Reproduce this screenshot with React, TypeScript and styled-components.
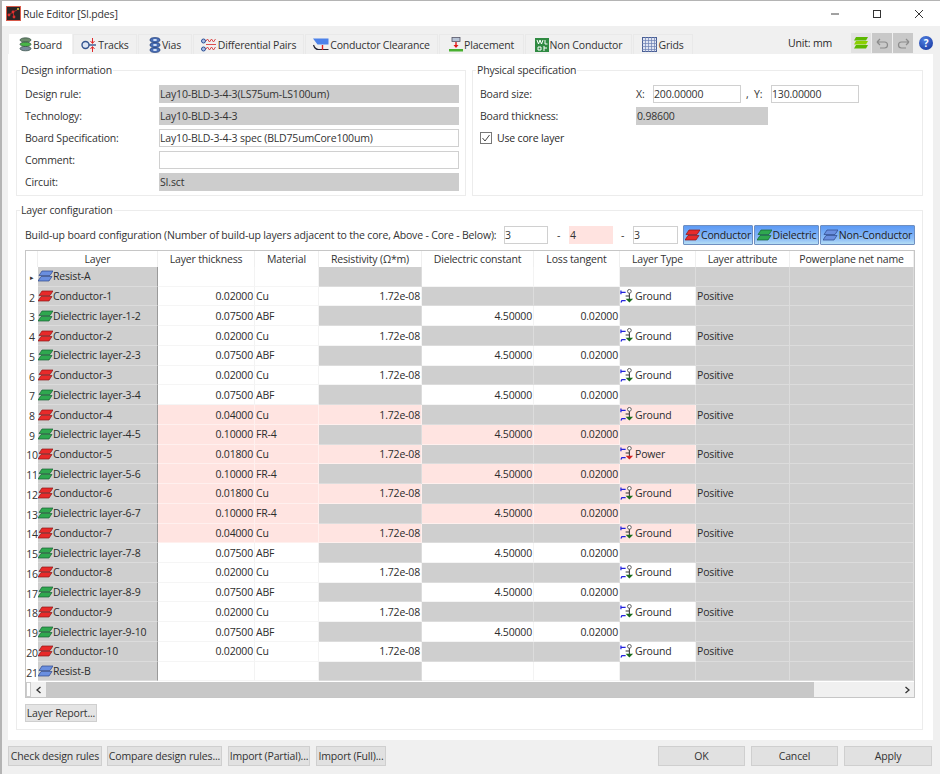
import React from "react";
import styled, { createGlobalStyle } from "styled-components";

const Global = createGlobalStyle`
  html, body { margin: 0; padding: 0; background: #f0f0f0; }
  #root { width: 940px; height: 774px; overflow: hidden; }
  * { box-sizing: border-box; }
`;

const Win = styled.div`
  width: 940px; height: 774px; display: flex; flex-direction: column;
  background: #f0f0f0; color: #2a2a2a;
  font-family: "Open Sans", "Noto Sans", sans-serif; font-size: 10.5px; letter-spacing: -0.17px;
  border-top: 1px solid #b4b4b4; border-left: 2px solid #b4b4b4;
`;
const TitleBar = styled.div`
  height: 25px; flex: none; background: #fff; display: flex; align-items: center; padding: 0 0 0 4px;
`;
const TitleText = styled.div`margin-left: 2px; flex: 1; color: #333;`;
const WinCtl = styled.div`width: 42px; height: 25px; display: flex; align-items: center; justify-content: center;`;
const TabRow = styled.div`
  height: 28px; flex: none; display: flex; align-items: flex-end; padding-left: 7px;
`;
const Tab = styled.div<{ $w: number; $active?: boolean }>`
  width: ${p => p.$w}px; height: 20px; display: flex; align-items: center; justify-content: center; gap: 1px;
  background: ${p => (p.$active ? "#fff" : "#f0f0f0")};
  border: 1px solid ${p => (p.$active ? "#fff" : "#e9e9e9")}; border-bottom: none;
  margin-right: 1px; color: #333; white-space: nowrap;
`;
const UnitBox = styled.div`flex: 1; display: flex; align-items: center; justify-content: flex-end; height: 20px; margin-bottom: 1px; padding-right: 7px;`;
const UnitText = styled.span`margin-right: 18px;`;
const ToolBtn = styled.div<{ $light?: boolean }>`
  width: 20px; height: 20px; display: flex; align-items: center; justify-content: center;
  background: ${p => (p.$light ? "#e2e2e2" : "#c9c9c9")}; margin-left: 1px;
`;
const HelpIcon = styled.div`
  width: 14px; height: 14px; margin-left: 6px; border-radius: 50%; color: #fff; font-weight: 700; font-size: 10px;
  display: flex; align-items: center; justify-content: center;
  background: radial-gradient(circle at 40% 30%, #4f7fe0, #12309a);
`;
const Panel = styled.div`
  height: 686px; flex: none; margin: 0 7px 0 6px; padding: 9px 10px 0 8px; background: #fff;
  display: flex; flex-direction: column; gap: 7px;
`;
const TopGroups = styled.div`display: flex; gap: 6px; height: 133px; flex: none;`;
const Group = styled.fieldset<{ $w?: number; $h?: number; $pl?: number }>`
  margin: 0; min-width: 0; border: 1px solid #ececec; padding: 8px 6px 0 ${p => p.$pl ?? 8}px;
  width: ${p => (p.$w ? p.$w + "px" : "auto")}; height: ${p => (p.$h ? p.$h + "px" : "auto")};
`;
const Legend = styled.legend<{ $ml?: number }>`padding: 0 1px; margin-left: ${p => p.$ml ?? -5}px; line-height: 14px; color: #333;`;
const FormRows = styled.div`display: flex; flex-direction: column; gap: 4px;`;
const FormRow = styled.div`display: flex; align-items: center; height: 18px;`;
const Label = styled.div<{ $w: number }>`width: ${p => p.$w}px; flex: none; color: #333;`;
const Field = styled.div<{ $w: number; $kind?: "gray" | "white" | "pink" }>`
  width: ${p => p.$w}px; height: 18px; flex: none; padding: 0; display: flex; align-items: center; color: #333;
  background: ${p => (p.$kind === "gray" ? "#cdcdcd" : p.$kind === "pink" ? "#ffe3e0" : "#fff")};
  border: 1px solid ${p => (p.$kind === "gray" ? "#cdcdcd" : p.$kind === "pink" ? "#ffe3e0" : "#d0d0d0")};
`;
const Sep = styled.span<{ $w: number; $l?: number }>`width: ${p => p.$w}px; padding-left: ${p => p.$l ?? 0}px; flex: none; color: #333;`;
const Check = styled.div`
  width: 12px; height: 12px; border: 1px solid #777; margin-right: 5px; display: flex; align-items: center; justify-content: center;
`;
const BuildRow = styled.div`display: flex; align-items: center; height: 20px; margin-bottom: 5px;`;
const BuildLabel = styled.div`width: 479px; flex: none; color: #333; white-space: nowrap;`;
const LegendBtn = styled.div<{ $w: number }>`
  width: ${p => p.$w}px; height: 20px; flex: none; margin-right: 1px; display: flex; align-items: center; justify-content: center; gap: 1px;
  background: linear-gradient(#5c9af5, #8cbcf7 70%, #b5def5); border: 1px solid #6f8fc0; border-radius: 1px; color: #222; white-space: nowrap;
`;
const GridWrap = styled.div`width: 890px; height: 448px; border: 1px solid #c6c6c6; display: flex; flex-direction: column;`;
const Table = styled.div`
  display: grid; flex: none;
  grid-template-columns: 12px 120px 97px 64px 103px 112px 86px 76px 94px 124px;
  grid-template-rows: 16px repeat(21, 19.74px);
`;
const Head = styled.div`
  display: flex; align-items: center; justify-content: center; background: #fff; color: #333;
  border-right: 1px solid #efefef; white-space: nowrap;
`;
const RowNum = styled.div<{ $marker?: boolean }>`
  display: flex; align-items: center; justify-content: center; background: #fff; color: #333; white-space: nowrap; padding-top: 2px;
  font-size: ${p => (p.$marker ? 7 : 10.5)}px;
`;
const Cell = styled.div<{ $t: "g" | "w" | "p"; $right?: boolean }>`
  display: flex; align-items: center; overflow: hidden; white-space: nowrap; padding: 0 1px; color: #2c2c2c;
  justify-content: ${p => (p.$right ? "flex-end" : "flex-start")};
  background: ${p => (p.$t === "g" ? "#cfcfcf" : p.$t === "p" ? "#ffe4e1" : "#fff")};
  border-right: 1px solid ${p => (p.$t === "g" ? "#dcdcdc" : p.$t === "p" ? "#fff0ee" : "#f3f3f3")};
  border-bottom: 1px solid ${p => (p.$t === "g" ? "#dcdcdc" : p.$t === "p" ? "#fff0ee" : "#f5f5f5")};
`;
const LayerCell = styled(Cell)`border-right: 1px solid #9a9a9a; padding-left: 0;`;
const TypeCell = styled(Cell)`padding-left: 0;`;
const Scroll = styled.div`flex: 1; display: flex; align-items: stretch; background: #f0f0f0; border-top: 1px solid #fff;`;
const ScrollStub = styled.div`width: 5px; border: 1px solid #ccc; background: #fff; flex: none;`;
const ScrollBtn = styled.div`width: 15px; flex: none; display: flex; align-items: center; justify-content: center; background: #f0f0f0;`;
const Thumb = styled.div`width: 768px; flex: none; background: #c8c8c8;`;
const ScrollFill = styled.div`flex: 1;`;
const Btn = styled.div<{ $w: number; $ml?: number }>`
  width: ${p => p.$w}px; height: 20px; flex: none; margin-left: ${p => p.$ml ?? 0}px; background: #e1e1e1; border: 1px solid #cfcfcf;
  display: flex; align-items: center; justify-content: center; color: #333; white-space: nowrap;
`;
const ReportBtn = styled(Btn)`height: 18px; margin-top: 6px; background: #e4e4e4;`;
const BottomBar = styled.div`flex: 1; display: flex; align-items: flex-start; padding: 6px 0 0 6px;`;
const Spacer = styled.div`flex: 1;`;

const LayerIcon = ({ c, d }: { c: string; d: string }) => (
  <svg width="15" height="12" viewBox="0 0 15 12" style={{ flex: "none" }}>
    <path d="M3 6.5h11l-3 4.5H0z" fill={c} stroke={d} strokeWidth=".7" />
    <path d="M4 1h11l-3 4.5H1z" fill={c} stroke={d} strokeWidth=".7" />
  </svg>
);
const NetIcon = ({ c = "#1c6b1c" }: { c?: string }) => (
  <svg width="15" height="17" viewBox="0 0 16 17" style={{ flex: "none" }}>
    <path d="M1 2v4M1 4h5M1 15l1-2h4" stroke="#2222dd" strokeWidth="1.3" fill="none" />
    <circle cx="10" cy="3" r="2" fill="#fff" stroke="#555" />
    <path d="M10 5v8M6 8h4" stroke="#333" strokeWidth="1.1" fill="none" />
    <path d="M6 11h8l-4 4z" fill={c} />
  </svg>
);
const BoardIcon = () => (
  <svg width="13" height="15" viewBox="0 0 13 15">
    <ellipse cx="6.5" cy="3" rx="5.5" ry="2.2" fill="#6c8a6c" stroke="#2e4a3e" strokeWidth=".7" />
    <ellipse cx="6.5" cy="7.3" rx="5.5" ry="2.2" fill="#49b548" stroke="#2e4a3e" strokeWidth=".7" />
    <ellipse cx="6.5" cy="11.6" rx="5.5" ry="2.2" fill="#7a8a9a" stroke="#2e4a3e" strokeWidth=".7" />
  </svg>
);
const TracksIcon = () => (
  <svg width="16" height="14" viewBox="0 0 16 14">
    <circle cx="4.5" cy="7" r="3.5" fill="#dde6f5" stroke="#34558f" strokeWidth="1.4" />
    <path d="M8 7h7" stroke="#34558f" strokeWidth="1.4" />
    <path d="M11.5 0v5M11.5 9v5M9.5 3l2 2.5 2-2.5M9.5 11l2-2.5 2 2.5" stroke="#e0282a" strokeWidth="1" fill="none" />
  </svg>
);
const ViasIcon = () => (
  <svg width="12" height="16" viewBox="0 0 12 16">
    {[3, 8, 13].map(y => (
      <g key={y}>
        <ellipse cx="6" cy={y} rx="5" ry="2.4" fill="#4a70b8" stroke="#1f3a72" strokeWidth=".7" />
        <ellipse cx="6" cy={y} rx="2" ry=".9" fill="#dfe8f8" />
      </g>
    ))}
  </svg>
);
const DiffIcon = () => (
  <svg width="16" height="14" viewBox="0 0 16 14">
    <circle cx="2.5" cy="3" r="2" fill="#aac0e6" stroke="#2c4f96" />
    <circle cx="2.5" cy="11" r="2" fill="#aac0e6" stroke="#2c4f96" />
    <path d="M5 3l1.5-2 2 3 2-3 2 3 2-3M5 6.5h10" stroke="#d83a3a" strokeWidth=".9" fill="none" />
    <path d="M5 11l1.5-2 2 3 2-3 2 3 2-3" stroke="#d83a3a" strokeWidth=".9" fill="none" />
  </svg>
);
const ClearIcon = () => (
  <svg width="16" height="14" viewBox="0 0 16 14">
    <path d="M0 .5h15.5v6h-11z" fill="#4d82ea" />
    <path d="M.5 7c1 3 2.5 4.5 5 4.5h10" stroke="#223" strokeWidth="1.2" fill="none" />
    <path d="M9.5 7v5" stroke="#e02020" strokeWidth="1.4" />
  </svg>
);
const PlaceIcon = () => (
  <svg width="14" height="15" viewBox="0 0 14 15">
    <rect x="3" y=".5" width="8" height="4" fill="#b7c3d6" stroke="#556" strokeWidth=".8" />
    <path d="M7 5v5" stroke="#e01818" strokeWidth="1.4" />
    <path d="M4.5 8h5L7 11z" fill="#e01818" />
    <rect x="0" y="12" width="14" height="2.5" fill="#48b030" />
  </svg>
);
const NonIcon = () => (
  <svg width="14" height="14" viewBox="0 0 14 14">
    <rect width="14" height="14" fill="#2f8a42" />
    <path d="M2 2l1.5 4L5 2l1.5 4L8 2M10 2v4h2.5M3 9h3v3H3zM9 8v5M9 10h3" stroke="#fff" strokeWidth="1" fill="none" />
  </svg>
);
const GridIcon = () => (
  <svg width="15" height="15" viewBox="0 0 15 15">
    <rect x=".5" y=".5" width="14" height="14" fill="#dfe4f2" stroke="#4a5f94" />
    <path d="M3.5 0v15M6.5 0v15M9.5 0v15M12.5 0v15M0 3.5h15M0 6.5h15M0 9.5h15M0 12.5h15" stroke="#6b7fb3" strokeWidth=".7" />
  </svg>
);
const StackIcon = () => (
  <svg width="14" height="12" viewBox="0 0 14 12">
    {[0, 4, 8].map(y => <path key={y} d={`M2 ${y}h12l-2 3.5H0z`} fill={y === 4 ? "#8bd000" : "#5cb800"} />)}
  </svg>
);
const Curve = ({ flip }: { flip?: boolean }) => (
  <svg width="13" height="11" viewBox="0 0 13 11" style={flip ? { transform: "scaleX(-1)" } : undefined}>
    <path d="M1 4h7.5a3 3 0 0 1 0 6H4M1 4l3-3M1 4l3 3" stroke="#8c8c8c" strokeWidth="1.2" fill="none" />
  </svg>
);
const AppIcon = () => (
  <svg width="15" height="15" viewBox="0 0 15 15" style={{ flex: "none" }}>
    <rect x=".5" y=".5" width="14" height="14" fill="#2a2526" stroke="#d85a4a" />
    <path d="M3 9l4-3 4-2M7 6l1 5" stroke="#d83030" strokeWidth=".8" />
    <circle cx="3" cy="9" r="1.4" fill="#e03030" />
    <circle cx="7" cy="6" r="1.4" fill="#e03030" />
    <circle cx="8" cy="11" r="1.4" fill="#e03030" />
    <circle cx="12" cy="3" r="1" fill="#e8d040" />
  </svg>
);

const RED = ["#e82a2a", "#8a1414"];
const GRN = ["#2fa84f", "#146030"];
const BLU = ["#6a8fe0", "#2c4688"];

type Row = { n: string; name: string; kind: "r" | "c" | "d"; th?: string; mat?: string; pink?: boolean; type?: string };
const rows: Row[] = [
  { n: "▸", name: "Resist-A", kind: "r" },
  { n: "2", name: "Conductor-1", kind: "c", th: "0.02000", mat: "Cu", type: "Ground" },
  { n: "3", name: "Dielectric layer-1-2", kind: "d", th: "0.07500", mat: "ABF" },
  { n: "4", name: "Conductor-2", kind: "c", th: "0.02000", mat: "Cu", type: "Ground" },
  { n: "5", name: "Dielectric layer-2-3", kind: "d", th: "0.07500", mat: "ABF" },
  { n: "6", name: "Conductor-3", kind: "c", th: "0.02000", mat: "Cu", type: "Ground" },
  { n: "7", name: "Dielectric layer-3-4", kind: "d", th: "0.07500", mat: "ABF" },
  { n: "8", name: "Conductor-4", kind: "c", th: "0.04000", mat: "Cu", type: "Ground", pink: true },
  { n: "9", name: "Dielectric layer-4-5", kind: "d", th: "0.10000", mat: "FR-4", pink: true },
  { n: "10", name: "Conductor-5", kind: "c", th: "0.01800", mat: "Cu", type: "Power", pink: true },
  { n: "11", name: "Dielectric layer-5-6", kind: "d", th: "0.10000", mat: "FR-4", pink: true },
  { n: "12", name: "Conductor-6", kind: "c", th: "0.01800", mat: "Cu", type: "Ground", pink: true },
  { n: "13", name: "Dielectric layer-6-7", kind: "d", th: "0.10000", mat: "FR-4", pink: true },
  { n: "14", name: "Conductor-7", kind: "c", th: "0.04000", mat: "Cu", type: "Ground", pink: true },
  { n: "15", name: "Dielectric layer-7-8", kind: "d", th: "0.07500", mat: "ABF" },
  { n: "16", name: "Conductor-8", kind: "c", th: "0.02000", mat: "Cu", type: "Ground" },
  { n: "17", name: "Dielectric layer-8-9", kind: "d", th: "0.07500", mat: "ABF" },
  { n: "18", name: "Conductor-9", kind: "c", th: "0.02000", mat: "Cu", type: "Ground" },
  { n: "19", name: "Dielectric layer-9-10", kind: "d", th: "0.07500", mat: "ABF" },
  { n: "20", name: "Conductor-10", kind: "c", th: "0.02000", mat: "Cu", type: "Ground" },
  { n: "21", name: "Resist-B", kind: "r" },
];
const heads = ["", "Layer", "Layer thickness", "Material", "Resistivity (Ω*m)", "Dielectric constant", "Loss tangent", "Layer Type", "Layer attribute", "Powerplane net name"];
const tabs: [string, number, React.ReactNode][] = [
  ["Board", 63, <BoardIcon />], ["Tracks", 64, <TracksIcon />], ["Vias", 54, <ViasIcon />],
  ["Differential Pairs", 111, <DiffIcon />], ["Conductor Clearance", 133, <ClearIcon />],
  ["Placement", 85, <PlaceIcon />], ["Non Conductor", 107, <NonIcon />], ["Grids", 60, <GridIcon />],
];

const LayerRow = ({ r }: { r: Row }) => {
  const icon = r.kind === "c" ? RED : r.kind === "d" ? GRN : BLU;
  const live = r.pink ? "p" : "w";
  const isC = r.kind === "c", isD = r.kind === "d";
  return (
    <>
      <RowNum $marker={r.n === "▸"}>{r.n}</RowNum>
      <LayerCell $t="g"><LayerIcon c={icon[0]} d={icon[1]} />{r.name}</LayerCell>
      <Cell $t={live} $right>{r.th}</Cell>
      <Cell $t={live}>{r.mat}</Cell>
      <Cell $t={isC ? live : "g"} $right>{isC ? "1.72e-08" : ""}</Cell>
      <Cell $t={isC ? "g" : live} $right>{isD ? "4.50000" : ""}</Cell>
      <Cell $t={isC ? "g" : live} $right>{isD ? "0.02000" : ""}</Cell>
      <TypeCell $t={isC ? live : "g"}>{isC && <NetIcon c={r.type === "Power" ? "#d02020" : undefined} />}{r.type}</TypeCell>
      <Cell $t="g">{isC ? "Positive" : ""}</Cell>
      <Cell $t="g" />
    </>
  );
};

export default function App() {
  return (
    <>
      <Global />
      <Win>
        <TitleBar>
          <AppIcon />
          <TitleText>Rule Editor [SI.pdes]</TitleText>
          <WinCtl><svg width="10" height="10"><path d="M1 5h8" stroke="#444" /></svg></WinCtl>
          <WinCtl><svg width="10" height="10"><rect x="1.5" y="1.5" width="7" height="7" fill="none" stroke="#333" /></svg></WinCtl>
          <WinCtl><svg width="10" height="10"><path d="M1 1l8 8M9 1l-8 8" stroke="#333" /></svg></WinCtl>
        </TitleBar>
        <TabRow>
          {tabs.map(([t, w, ic], i) => <Tab key={t} $w={w} $active={i === 0}>{ic}{t}</Tab>)}
          <UnitBox>
            <UnitText>Unit: mm</UnitText>
            <ToolBtn $light><StackIcon /></ToolBtn>
            <ToolBtn><Curve /></ToolBtn>
            <ToolBtn><Curve flip /></ToolBtn>
            <HelpIcon>?</HelpIcon>
          </UnitBox>
        </TabRow>
        <Panel>
          <TopGroups>
            <Group $w={450}>
              <Legend>Design information</Legend>
              <FormRows>
                <FormRow><Label $w={134}>Design rule:</Label><Field $w={300} $kind="gray">Lay10-BLD-3-4-3(LS75um-LS100um)</Field></FormRow>
                <FormRow><Label $w={134}>Technology:</Label><Field $w={300} $kind="gray">Lay10-BLD-3-4-3</Field></FormRow>
                <FormRow><Label $w={134}>Board Specification:</Label><Field $w={300}>Lay10-BLD-3-4-3 spec (BLD75umCore100um)</Field></FormRow>
                <FormRow><Label $w={134}>Comment:</Label><Field $w={300} /></FormRow>
                <FormRow><Label $w={134}>Circuit:</Label><Field $w={300} $kind="gray">SI.sct</Field></FormRow>
              </FormRows>
            </Group>
            <Group $w={451} $pl={7}>
              <Legend $ml={-4}>Physical specification</Legend>
              <FormRows>
                <FormRow>
                  <Label $w={156}>Board size:</Label>
                  <Sep $w={17}>X:</Sep><Field $w={88}>200.00000</Field>
                  <Sep $w={13} $l={5}>,</Sep><Sep $w={17}>Y:</Sep><Field $w={88}>130.00000</Field>
                </FormRow>
                <FormRow><Label $w={156}>Board thickness:</Label><Field $w={132} $kind="gray">0.98600</Field></FormRow>
                <FormRow>
                  <Check><svg width="10" height="10"><path d="M1.5 5l2.5 3 4.5-6" stroke="#444" fill="none" /></svg></Check>
                  Use core layer
                </FormRow>
              </FormRows>
            </Group>
          </TopGroups>
          <Group $h={527}>
            <Legend>Layer configuration</Legend>
            <BuildRow>
              <BuildLabel>Build-up board configuration (Number of build-up layers adjacent to the core, Above - Core - Below):</BuildLabel>
              <Field $w={44}>3</Field>
              <Sep $w={21} $l={9}>-</Sep>
              <Field $w={44} $kind="pink">4</Field>
              <Sep $w={20} $l={8}>-</Sep>
              <Field $w={45}>3</Field>
              <Sep $w={5} />
              <LegendBtn $w={70}><LayerIcon c={RED[0]} d={RED[1]} />Conductor</LegendBtn>
              <LegendBtn $w={65}><LayerIcon c={GRN[0]} d={GRN[1]} />Dielectric</LegendBtn>
              <LegendBtn $w={95}><LayerIcon c={BLU[0]} d={BLU[1]} />Non-Conductor</LegendBtn>
            </BuildRow>
            <GridWrap>
              <Table>
                {heads.map((h, i) => <Head key={i}>{h}</Head>)}
                {rows.map(r => <LayerRow key={r.n} r={r} />)}
              </Table>
              <Scroll>
                <ScrollStub />
                <ScrollBtn><svg width="8" height="8"><path d="M5.5 1L2 4l3.5 3" stroke="#333" strokeWidth="1.3" fill="none" /></svg></ScrollBtn>
                <Thumb />
                <ScrollFill />
                <ScrollBtn><svg width="8" height="8"><path d="M2.5 1L6 4 2.5 7" stroke="#333" strokeWidth="1.3" fill="none" /></svg></ScrollBtn>
              </Scroll>
            </GridWrap>
            <ReportBtn $w={72}>Layer Report...</ReportBtn>
          </Group>
        </Panel>
        <BottomBar>
          <Btn $w={94}>Check design rules</Btn>
          <Btn $w={115} $ml={5}>Compare design rules...</Btn>
          <Btn $w={82} $ml={6}>Import (Partial)...</Btn>
          <Btn $w={70} $ml={6}>Import (Full)...</Btn>
          <Spacer />
          <Btn $w={87}>OK</Btn>
          <Btn $w={87} $ml={6}>Cancel</Btn>
          <Btn $w={88} $ml={6}>Apply</Btn>
          <Sep $w={8} />
        </BottomBar>
      </Win>
    </>
  );
}
